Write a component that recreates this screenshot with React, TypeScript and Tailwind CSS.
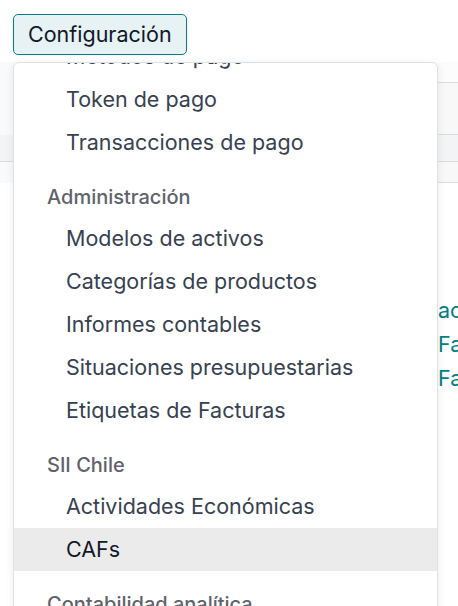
const groups = [
  {
    header: null,
    items: ['Métodos de pago', 'Token de pago', 'Transacciones de pago'],
  },
  {
    header: 'Administración',
    items: [
      'Modelos de activos',
      'Categorías de productos',
      'Informes contables',
      'Situaciones presupuestarias',
      'Etiquetas de Facturas',
    ],
  },
  {
    header: 'SII Chile',
    items: ['Actividades Económicas', 'CAFs'],
  },
  {
    header: 'Contabilidad analítica',
    items: ['Cuentas analíticas'],
  },
]

export default function App() {
  return (
    <div
      className="relative h-[606px] w-[458px] overflow-hidden bg-white"
      style={{ fontFamily: 'Inter, "Noto Sans", sans-serif' }}
    >
      {/* Top bar */}
      <div className="px-[13px] pt-[14px] pb-[7px]">
        <button className="flex h-[41px] items-center rounded-[5px] border border-[#017e84] bg-[#e6f2f3] px-[14px] text-[21.5px] text-[#111827]">
          Configuración
        </button>
      </div>

      {/* Page behind the menu */}
      <div className="flex flex-col bg-[#f9fafb]">
        <div className="ml-[20px] h-[21px] border-b border-[#dcdcdc] bg-[#fcfcfc]" />
        <div className="ml-[20px] h-[52px] border-b border-[#dcdcdc] bg-[#f8f8f8]" />
        <div className="h-[27px] border-b border-[#dcdcdc] bg-[#f2f4f5]" />
        <div className="ml-[20px] h-[21px] border-b border-[#dcdcdc] bg-[#f8f8f8]" />
        <div className="flex h-[345px] flex-col gap-[10px] whitespace-nowrap bg-white pl-[438px] pt-[115px] text-[21.5px] leading-[24px] text-[#017e84]">
          <span>ac</span>
          <span>Fa</span>
          <span>Fa</span>
        </div>
      </div>

      {/* Dropdown menu */}
      <div className="absolute left-[13px] top-[62px] h-[570px] w-[425px] overflow-hidden rounded-[6px] border border-[#dee2e6] bg-white shadow-[0_2px_10px_rgba(0,0,0,0.08)]">
        <div className="-mt-[28px] flex flex-col">
          {groups.map((g, gi) => (
            <div key={gi} className="flex flex-col">
              {g.header && (
                <div className="mt-[12px] flex h-[41px] items-center pl-[33px] text-[20px] font-medium text-[#5f636a]">
                  {g.header}
                </div>
              )}
              {g.items.map((item) => (
                <div
                  key={item}
                  className={
                    item === 'CAFs'
                      ? 'flex h-[43px] items-center bg-[#ebebeb] pl-[52px] text-[21.5px] text-[#111827]'
                      : 'flex h-[43px] items-center pl-[52px] text-[21.5px] text-[#374151]'
                  }
                >
                  {item}
                </div>
              ))}
            </div>
          ))}
        </div>
      </div>
    </div>
  )
}
